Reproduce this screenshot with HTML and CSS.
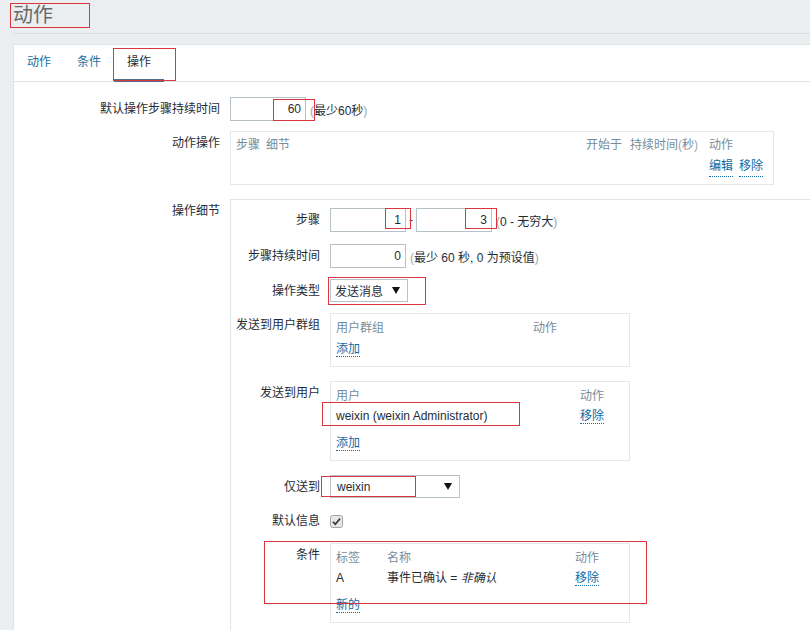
FILE: index.html
```html
<!DOCTYPE html>
<html lang="zh-CN">

<head>
  <meta charset="UTF-8">
  <title>动作</title>
  <link rel="stylesheet" href="styles.css">
</head>

<body>

  <div class="page-title">
    <h1>动作</h1>
  </div>

  <div class="card">
    <ul class="tabs">
      <li>动作</li>
      <li>条件</li>
      <li class="active">操作</li>
    </ul>

    <div class="form">
      <div class="row">
        <div class="lbl">默认操作步骤持续时间</div>
        <div class="field">
          <input class="num" type="text" value="60">
          <span class="hint"><i class="paren">(</i>最少60秒<i class="paren">)</i></span>
        </div>
      </div>

      <div class="row row-op">
        <div class="lbl">动作操作</div>
        <div class="list-box op-box">
          <div class="list-head">
            <span class="c-step">步骤</span>
            <span class="c-detail">细节</span>
            <span class="c-start">开始于</span>
            <span class="c-dur">持续时间<i class="paren">(</i>秒<i class="paren">)</i></span>
            <span class="c-act">动作</span>
          </div>
          <div class="list-row">
            <span class="c-step"></span>
            <span class="c-detail"></span>
            <span class="c-start"></span>
            <span class="c-dur"></span>
            <span class="c-act"><a class="link">编辑</a><a class="link">移除</a></span>
          </div>
        </div>
      </div>

      <div class="row">
        <div class="lbl">操作细节</div>
        <div class="detail">

          <div class="row">
            <div class="lbl">步骤</div>
            <div class="field">
              <input class="num" type="text" value="1">
              <span class="dash">-</span>
              <input class="num" type="text" value="3">
              <span class="hint"><i class="paren">(</i>0 - 无穷大<i class="paren">)</i></span>
            </div>
          </div>

          <div class="row mb11">
            <div class="lbl">步骤持续时间</div>
            <div class="field">
              <input class="num" type="text" value="0">
              <span class="hint"><i class="paren">(</i>最少 60 秒, 0 为预设值<i class="paren">)</i></span>
            </div>
          </div>

          <div class="row mb10">
            <div class="lbl">操作类型</div>
            <div class="select sel-type">
              <span>发送消息</span>
              <svg class="arrow" width="8" height="7" viewBox="0 0 8 7"><polygon points="0,0 8,0 4,7" fill="#111"/></svg>
            </div>
          </div>

          <div class="row mb14">
            <div class="lbl">发送到用户群组</div>
            <div class="list-box">
              <div class="list-head">
                <span class="c-group">用户群组</span>
                <span>动作</span>
              </div>
              <div class="list-add"><a class="link">添加</a></div>
            </div>
          </div>

          <div class="row mb14">
            <div class="lbl">发送到用户</div>
            <div class="list-box">
              <div class="list-head">
                <span class="c-user">用户</span>
                <span>动作</span>
              </div>
              <div class="list-row">
                <span class="c-user">weixin (weixin Administrator)</span>
                <span><a class="link">移除</a></span>
              </div>
              <div class="list-add"><a class="link">添加</a></div>
            </div>
          </div>

          <div class="row">
            <div class="lbl">仅送到</div>
            <div class="select sel-media">
              <span>weixin</span>
              <svg class="arrow" width="8" height="7" viewBox="0 0 8 7"><polygon points="0,0 8,0 4,7" fill="#111"/></svg>
            </div>
          </div>

          <div class="row row-check">
            <div class="lbl">默认信息</div>
            <div class="field">
              <svg class="check" width="13" height="13" viewBox="0 0 13 13">
                <rect x="0.5" y="0.5" width="12" height="12" rx="2" fill="#e6e6e6" stroke="#a4a4a4"/>
                <path d="M3 6.8 L5.3 9.2 L10 3.6" fill="none" stroke="#3a3a3a" stroke-width="1.7"/>
              </svg>
            </div>
          </div>

          <div class="row">
            <div class="lbl">条件</div>
            <div class="list-box">
              <div class="list-head">
                <span class="c-tag">标签</span>
                <span class="c-name">名称</span>
                <span>动作</span>
              </div>
              <div class="list-row">
                <span class="c-tag">A</span>
                <span class="c-name">事件已确认 = <em>非确认</em></span>
                <span><a class="link">移除</a></span>
              </div>
              <div class="list-add"><a class="link">新的</a></div>
            </div>
          </div>

        </div>
      </div>
    </div>
  </div>

  <!-- red annotation frames drawn over the screenshot -->
  <div class="mark mark-title"></div>
  <div class="mark mark-tab"></div>
  <div class="mark mark-60"></div>
  <div class="mark mark-step1"></div>
  <div class="mark mark-step3"></div>
  <div class="mark mark-type"></div>
  <div class="mark mark-user"></div>
  <div class="mark mark-media"></div>
  <div class="mark mark-cond"></div>

</body>

</html>
```

FILE: styles.css
```css
* {
  box-sizing: border-box;
  margin: 0;
  padding: 0;
}

body {
  font-family: "Liberation Sans", "Noto Sans CJK SC", sans-serif;
  font-size: 12px;
  color: #1f2c33;
  background: #ebeef0;
  height: 630px;
  overflow: hidden;
}

.page-title {
  margin-left: 13px;
  height: 34px;
  border-bottom: 1px solid #dcdfe2;
}

.page-title h1 {
  font-size: 20px;
  font-weight: normal;
  color: #6a6a6a;
  line-height: 30px;
}

.card {
  margin: 10px -20px 0 13px;
  background: #fff;
  border: 1px solid #dfe4e7;
  border-bottom: none;
  height: 586px;
}

.tabs {
  display: flex;
  list-style: none;
  height: 37px;
  border-bottom: 1px solid #dfe4e7;
}

.tabs li {
  height: 37px;
  padding: 0 13px;
  line-height: 35px;
  color: #1a6ea3;
  border-bottom: 3px solid transparent;
  margin-bottom: -1px;
}

.tabs li.active {
  color: #1f2c33;
  border-bottom-color: #4f6d8d;
}

.form {
  padding-top: 15px;
}

.row {
  display: flex;
  align-items: flex-start;
  margin-bottom: 12px;
}

.form > .row:first-child {
  margin-bottom: 10px;
}

.form > .row-op {
  margin-bottom: 14px;
}

.mb10 { margin-bottom: 10px; }
.mb11 { margin-bottom: 11px; }
.mb14 { margin-bottom: 14px; }

.lbl {
  flex: none;
  width: 216px;
  padding-right: 10px;
  text-align: right;
  line-height: 24px;
  white-space: nowrap;
}

.detail .lbl {
  width: 99px;
}

.field {
  display: flex;
  align-items: center;
  height: 24px;
}

.num {
  width: 76px;
  height: 24px;
  border: 1px solid #b6c1c8;
  padding-right: 4px;
  text-align: right;
  font: inherit;
  color: inherit;
  background: #fff;
  outline: none;
}

.hint {
  margin-left: 4px;
  white-space: nowrap;
}

.dash {
  width: 10px;
  text-align: center;
}

.select {
  display: flex;
  align-items: center;
  justify-content: space-between;
  height: 23px;
  border: 1px solid #b6c1c8;
  padding: 0 7px 0 4px;
}

.sel-type {
  width: 78px;
}

.sel-media {
  width: 130px;
  padding-left: 6px;
}

.detail {
  flex: 1;
  border: 1px solid #e0e4e7;
  border-right: none;
  border-bottom: none;
  padding-top: 8px;
  height: 431px;
}

.row-check {
  height: 20px;
  align-items: center;
}

.row-check .lbl {
  line-height: 20px;
}

.check {
  display: block;
}

/* list tables */
.list-box {
  width: 300px;
  border: 1px solid #e4e8ea;
  padding: 4px 6px 6px 5px;
}

.list-head,
.list-row {
  display: flex;
  height: 20px;
  line-height: 20px;
  white-space: nowrap;
}

.list-head {
  color: #768d99;
}

.list-add {
  line-height: 22px;
}

.list-row + .list-add {
  margin-top: 6px;
}

.link {
  color: #0f6aa6;
  border-bottom: 1px dotted #0f6aa6;
  cursor: pointer;
}

.c-group { width: 197px; }
.c-user { width: 244px; }
.c-tag { width: 51px; }
.c-name { width: 188px; }

em {
  font-style: italic;
}

.op-box {
  width: 544px;
  padding: 3px 6px 7px 5px;
}

.op-box .list-row {
  height: 22px;
  line-height: 22px;
}

.c-step { width: 30px; }
.c-detail { flex: 1; }
.c-start { width: 44px; }
.c-dur { width: 79px; }
.c-act { width: 58px; display: flex; gap: 6px; }

.paren {
  font-style: normal;
  color: #9aa8b0;
}

/* annotation frames */
.mark {
  position: absolute;
  border: 1px solid #d9363e;
}

.mark-title { left: 10px; top: 3px; width: 80px; height: 25px; }
.mark-tab { left: 113px; top: 48px; width: 63px; height: 33px; }
.mark-60 { left: 273px; top: 99px; width: 42px; height: 22px; }
.mark-step1 { left: 385px; top: 208px; width: 26px; height: 21px; }
.mark-step3 { left: 465px; top: 208px; width: 32px; height: 21px; }
.mark-type { left: 328px; top: 277px; width: 98px; height: 28px; }
.mark-user { left: 322px; top: 402px; width: 198px; height: 24px; }
.mark-media { left: 321px; top: 476px; width: 95px; height: 21px; }
.mark-cond { left: 264px; top: 541px; width: 383px; height: 63px; }
```
